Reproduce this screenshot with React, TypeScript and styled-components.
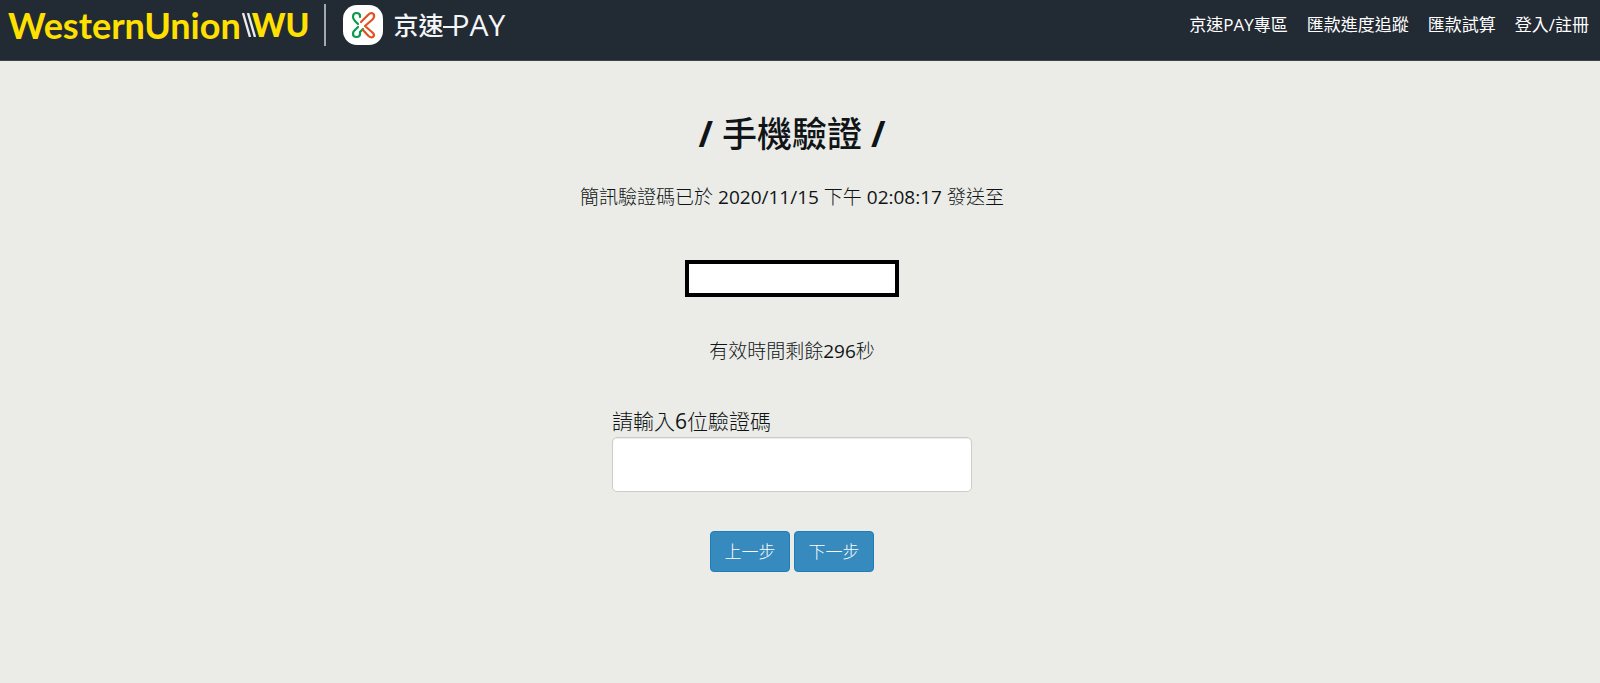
import React, { useState } from "react";
import styled, { createGlobalStyle } from "styled-components";

const GlobalStyle = createGlobalStyle`
  *, *::before, *::after { box-sizing: border-box; }
  body {
    margin: 0;
    min-height: 100vh;
    background: #ebece7;
    color: #101417;
    font-family: "Open Sans", "Noto Sans CJK TC", sans-serif;
  }
`;

const Header = styled.header`
  display: flex;
  justify-content: space-between;
  align-items: flex-start;
  padding: 0 11px 10px 8px;
  background: #222a34;
  border-bottom: 1px solid #3a424b;
`;

const Brand = styled.a`
  display: flex;
  align-items: center;
  height: 50px;
  text-decoration: none;
`;

const WesternUnion = styled.span`
  display: flex;
  align-items: center;
  color: #ffe000;
  font-family: Lato, sans-serif;
  font-size: 36px;
  line-height: 50px;
  font-weight: 700;
`;

const Initials = styled.span`
  margin-left: -4px;
  font-size: 32px;
  font-weight: 900;
`;

const Slashes = styled.svg`
  width: 14px;
  height: 24px;
  margin-left: 1px;
`;

const Divider = styled.span`
  width: 2px;
  height: 42px;
  margin: 0 17px 0 15px;
  background: #a4a8ac;
`;

const PayIcon = styled.svg`
  width: 40px;
  height: 40px;
`;

const PayName = styled.span`
  display: flex;
  align-items: center;
  margin-left: 10px;
  color: #f4f5f6;
  font-size: 25px;
  line-height: 50px;
  font-weight: 500;
`;

const PayLatin = styled.span`
  font-size: 30px;
  font-weight: 400;
`;

const Dash = styled.span`
  width: 12px;
  height: 2px;
  margin: 4px -4px 0 0;
  background: currentColor;
`;

const Nav = styled.nav`
  display: flex;
  gap: 19px;
`;

const NavLink = styled.a`
  color: #fff;
  font-size: 17px;
  line-height: 50px;
  text-decoration: none;
`;

const Main = styled.main`
  display: flex;
  flex-direction: column;
  align-items: center;
  padding: 49px 16px 48px 0;
`;

const Title = styled.h1`
  margin: 0;
  font-size: 35px;
  line-height: 48px;
  font-weight: 500;
`;

const Slash = styled.span`
  font-weight: 700;
`;

const Message = styled.p`
  margin: 23px 0 0;
  font-size: 19px;
  line-height: 32px;
  font-weight: 300;
`;

const Digits = styled.span`
  font-weight: 400;
`;

const PhoneNumber = styled.output`
  width: 214px;
  height: 37px;
  margin: 47px 0 15px;
  border: 4px solid #000;
  background: #fff;
`;

const Form = styled.form`
  display: flex;
  flex-direction: column;
  width: 360px;
  margin-top: 38px;
`;

const Label = styled.label`
  font-size: 21px;
  line-height: 32px;
  font-weight: 300;
`;

const CodeInput = styled.input`
  width: 100%;
  height: 55px;
  padding: 8px 12px;
  border: 1px solid #ccc;
  border-radius: 5px;
  background: #fff;
  box-shadow: inset 0 1px 1px rgba(0, 0, 0, 0.075);
  font: inherit;
  font-size: 21px;
`;

const Actions = styled.div`
  display: flex;
  justify-content: center;
  gap: 4px;
  margin-top: 39px;
`;

const Button = styled.button`
  width: 80px;
  padding: 6px 0;
  border: 1px solid #1c80b7;
  border-radius: 4px;
  background: #368abd;
  color: #fff;
  font: inherit;
  font-size: 17px;
  line-height: 27px;
  font-weight: 300;
`;

const links = ["京速PAY專區", "匯款進度追蹤", "匯款試算", "登入/註冊"];

export default function App() {
  const [code, setCode] = useState("");

  return (
    <>
      <GlobalStyle />
      <Header>
        <Brand href="#">
          <WesternUnion>
            WesternUnion
            <Slashes viewBox="0 0 14 24" aria-hidden="true">
              <path d="M1 0L8 24M6 0L13 24" stroke="#e8eaec" strokeWidth="2.4" fill="none" />
            </Slashes>
            <Initials>WU</Initials>
          </WesternUnion>
          <Divider />
          <PayIcon viewBox="0 0 40 40" aria-hidden="true">
            <rect width="40" height="40" rx="14" fill="#fff" />
            <g fill="none" strokeWidth="2.2" strokeLinecap="round" strokeLinejoin="round">
              <path
                stroke="#0c9a4b"
                d="M17 12V11Q17 8 13.500 8Q10 8 10 12Q10 14 12 16L15 19M15 22L11 26Q10 27 10 29Q10 32 13.500 32Q17 32 17 29V27L20 24"
              />
              <path
                stroke="#e5501f"
                d="M18 17L25 10Q28 7 30.500 9Q32 11 30 14L22 21L30 28Q32 30 30 32Q28 33 25.500 31L20 25"
              />
            </g>
          </PayIcon>
          <PayName>
            京速
            <Dash />
            <PayLatin>PAY</PayLatin>
          </PayName>
        </Brand>
        <Nav>
          {links.map((text) => (
            <NavLink key={text} href="#">
              {text}
            </NavLink>
          ))}
        </Nav>
      </Header>
      <Main>
        <Title>
          <Slash>/</Slash> 手機驗證 <Slash>/</Slash>
        </Title>
        <Message>
          簡訊驗證碼已於 <Digits>2020/11/15</Digits> 下午 <Digits>02:08:17</Digits> 發送至
        </Message>
        <PhoneNumber aria-label="手機號碼" />
        <Message>
          有效時間剩餘<Digits>296</Digits>秒
        </Message>
        <Form onSubmit={(event) => event.preventDefault()}>
          <Label htmlFor="code">
            請輸入<Digits>6</Digits>位驗證碼
          </Label>
          <CodeInput
            id="code"
            inputMode="numeric"
            maxLength={6}
            value={code}
            onChange={(event) => setCode(event.target.value)}
          />
          <Actions>
            <Button type="button">上一步</Button>
            <Button type="submit">下一步</Button>
          </Actions>
        </Form>
      </Main>
    </>
  );
}
